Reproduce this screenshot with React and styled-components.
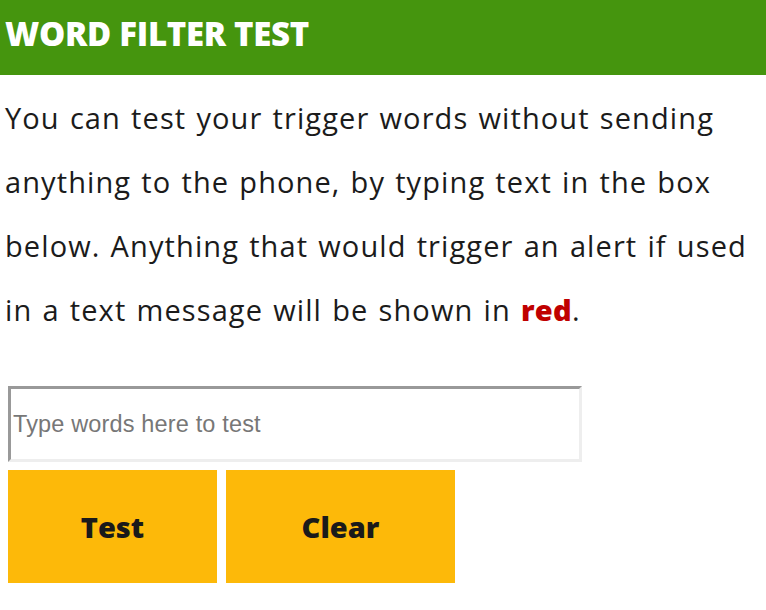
import { createGlobalStyle, styled } from "styled-components";

const GlobalStyle = createGlobalStyle`
    body {
        margin: 0;
        background: #fff;
        font-family: "Open Sans", "DejaVu Sans", sans-serif;
        color: #1b1b1b;
    }
`;

const Banner = styled.header`
    height: 75px;
    background-color: #45950e;
    display: flex;
    align-items: center;
    padding: 0 5px 8px 5px;
    box-sizing: border-box;
`;

const Title = styled.h1`
    margin: 0;
    color: #fff;
    font-size: 33px;
    font-weight: 800;
    letter-spacing: -0.3px;
`;

const Intro = styled.p`
    margin: 11px 0 0 0;
    padding: 0 5px;
    font-size: 29px;
    letter-spacing: 1.1px;
    word-spacing: 1.5px;
    line-height: 64px;
`;

const Red = styled.strong`
    color: #c00000;
    font-weight: 800;
    letter-spacing: 0.3px;
`;

const Form = styled.div`
    margin: 44px 0 0 8px;
    display: flex;
    flex-direction: column;
    gap: 8px;
`;

const TextInput = styled.input`
    width: 574px;
    height: 76px;
    box-sizing: border-box;
    border-style: solid;
    border-width: 3px;
    border-color: #999 #eee #eee #999;
    padding: 0 2px;
    font-family: "Liberation Sans", Arial, sans-serif;
    font-size: 23.5px;
    letter-spacing: 0.15px;
    outline: none;

    &::placeholder {
        color: #777;
    }
`;

const Buttons = styled.div`
    display: flex;
    gap: 9px;
`;

const Button = styled.button`
    width: ${props => props.$width}px;
    height: 113px;
    border: none;
    background-color: #fdb909;
    color: #1a1a1a;
    font-family: "Open Sans", "DejaVu Sans", sans-serif;
    font-size: 29px;
    font-weight: 800;
    cursor: pointer;
`;

export default function App() {
    return (
        <>
            <GlobalStyle />
            <Banner>
                <Title>WORD FILTER TEST</Title>
            </Banner>

            <Intro>
                You can test your trigger words without sending anything to the phone, by typing text in the box below. Anything that would trigger an alert if used in a text message will be shown in <Red>red</Red>.
            </Intro>

            <Form>
                <TextInput type="text" placeholder="Type words here to test" />
                <Buttons>
                    <Button $width={209}>Test</Button>
                    <Button $width={229}>Clear</Button>
                </Buttons>
            </Form>
        </>
    );
}
